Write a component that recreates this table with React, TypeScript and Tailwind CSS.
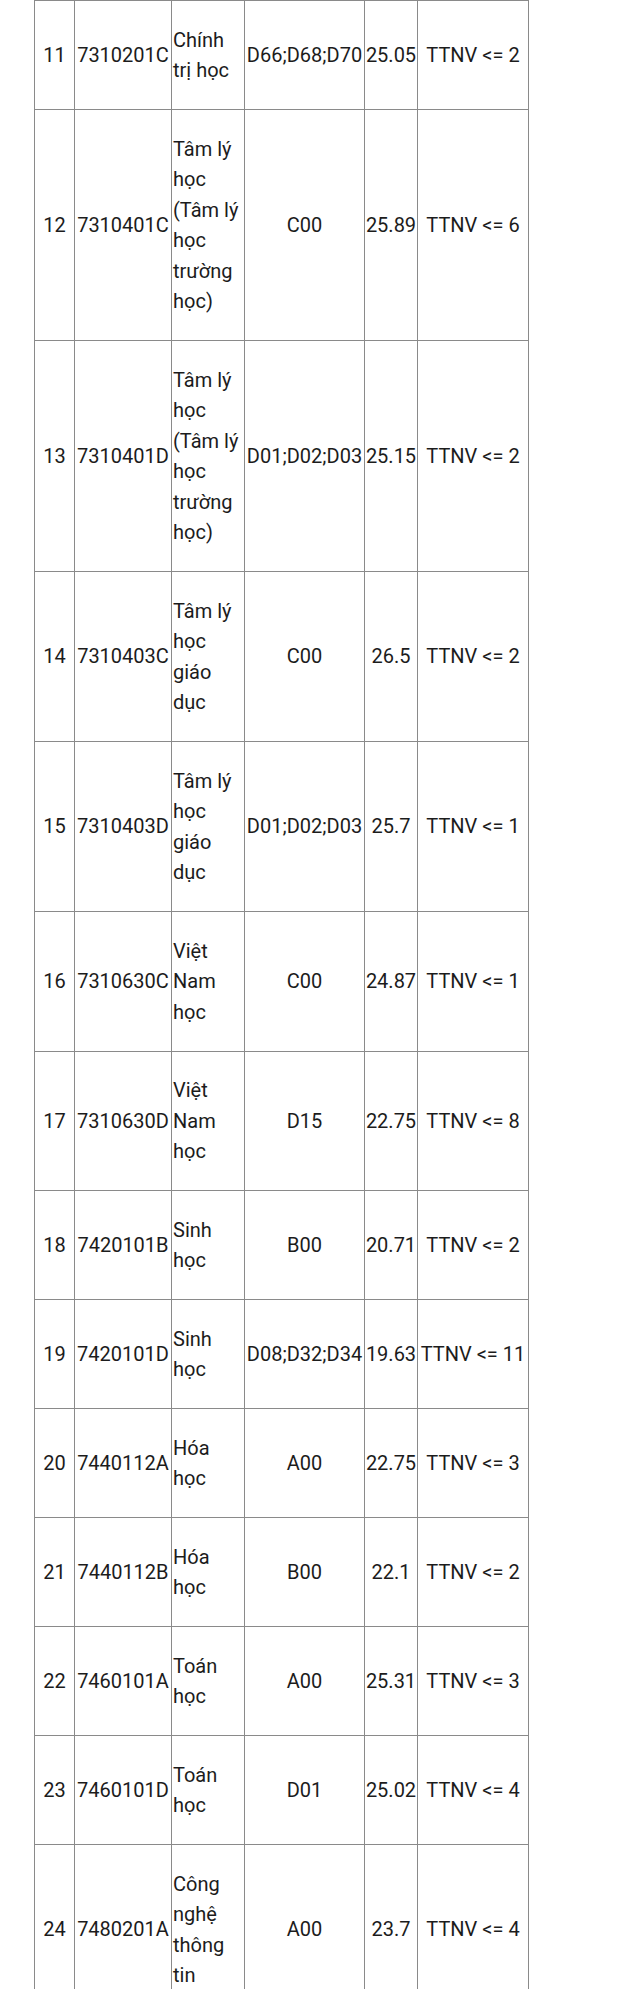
type Row = {
  stt: number
  code: string
  name: string
  subjects: string
  score: string
  rule: string
}

const rows: Row[] = [
  { stt: 11, code: '7310201C', name: 'Chính trị học', subjects: 'D66;D68;D70', score: '25.05', rule: 'TTNV <= 2' },
  { stt: 12, code: '7310401C', name: 'Tâm lý học (Tâm lý học trường học)', subjects: 'C00', score: '25.89', rule: 'TTNV <= 6' },
  { stt: 13, code: '7310401D', name: 'Tâm lý học (Tâm lý học trường học)', subjects: 'D01;D02;D03', score: '25.15', rule: 'TTNV <= 2' },
  { stt: 14, code: '7310403C', name: 'Tâm lý học giáo dục', subjects: 'C00', score: '26.5', rule: 'TTNV <= 2' },
  { stt: 15, code: '7310403D', name: 'Tâm lý học giáo dục', subjects: 'D01;D02;D03', score: '25.7', rule: 'TTNV <= 1' },
  { stt: 16, code: '7310630C', name: 'Việt Nam học', subjects: 'C00', score: '24.87', rule: 'TTNV <= 1' },
  { stt: 17, code: '7310630D', name: 'Việt Nam học', subjects: 'D15', score: '22.75', rule: 'TTNV <= 8' },
  { stt: 18, code: '7420101B', name: 'Sinh học', subjects: 'B00', score: '20.71', rule: 'TTNV <= 2' },
  { stt: 19, code: '7420101D', name: 'Sinh học', subjects: 'D08;D32;D34', score: '19.63', rule: 'TTNV <= 11' },
  { stt: 20, code: '7440112A', name: 'Hóa học', subjects: 'A00', score: '22.75', rule: 'TTNV <= 3' },
  { stt: 21, code: '7440112B', name: 'Hóa học', subjects: 'B00', score: '22.1', rule: 'TTNV <= 2' },
  { stt: 22, code: '7460101A', name: 'Toán học', subjects: 'A00', score: '25.31', rule: 'TTNV <= 3' },
  { stt: 23, code: '7460101D', name: 'Toán học', subjects: 'D01', score: '25.02', rule: 'TTNV <= 4' },
  { stt: 24, code: '7480201A', name: 'Công nghệ thông tin', subjects: 'A00', score: '23.7', rule: 'TTNV <= 4' },
]

// shared cell look: right + bottom rule, vertical centering
const cell = 'flex items-center border-r border-b border-[#8a8a8a] py-[23.5px]'

export default function App() {
  return (
    <div className="min-h-screen bg-white font-['Roboto','Liberation_Sans',sans-serif] text-[20px] leading-[30.5px] text-[#1c1c1c]">
      <div className="ml-[34px] grid w-[495px] grid-cols-[40px_97px_73px_120px_53px_111px] border-l border-t border-[#8a8a8a]">
        {rows.map((r) => (
          <div key={r.stt} className="contents">
            <div className={`${cell} justify-center`}>{r.stt}</div>
            <div className={`${cell} justify-center px-[1px] whitespace-nowrap`}>{r.code}</div>
            <div className={`${cell} justify-start px-[1px]`}>{r.name}</div>
            <div className={`${cell} justify-center whitespace-nowrap`}>{r.subjects}</div>
            <div className={`${cell} justify-center whitespace-nowrap`}>{r.score}</div>
            <div className={`${cell} justify-center whitespace-nowrap`}>{r.rule}</div>
          </div>
        ))}
      </div>
    </div>
  )
}
